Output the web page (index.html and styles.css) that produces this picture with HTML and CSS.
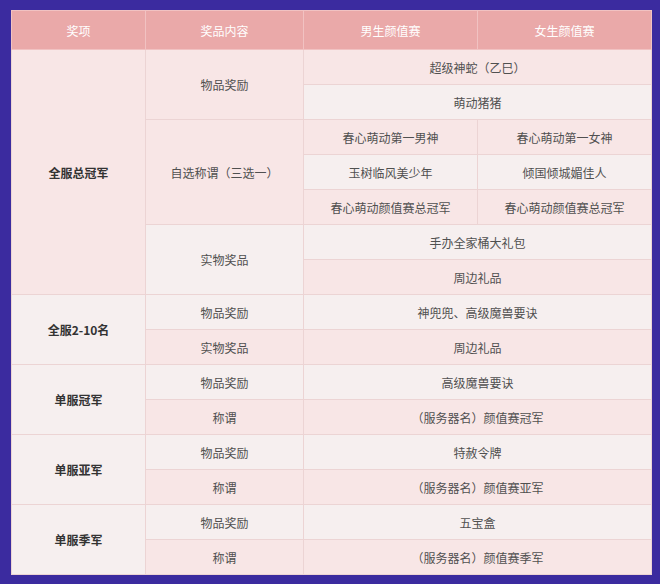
FILE: index.html
```html
<!DOCTYPE html>
<html lang="zh">
<head>
<meta charset="utf-8">
<link rel="stylesheet" href="styles.css">
</head>
<body>
<div class="page">
<table class="prize">
<colgroup>
<col class="c1"><col class="c2"><col class="c3"><col class="c4">
</colgroup>
<thead>
<tr><th>奖项</th><th>奖品内容</th><th>男生颜值赛</th><th>女生颜值赛</th></tr>
</thead>
<tbody>
<tr class="pink"><td rowspan="7" class="award">全服总冠军</td><td rowspan="2">物品奖励</td><td colspan="2">超级神蛇（乙巳）</td></tr>
<tr class="light"><td colspan="2">萌动猪猪</td></tr>
<tr class="pink"><td rowspan="3">自选称谓（三选一）</td><td>春心萌动第一男神</td><td>春心萌动第一女神</td></tr>
<tr class="light"><td>玉树临风美少年</td><td>倾国倾城媚佳人</td></tr>
<tr class="pink"><td>春心萌动颜值赛总冠军</td><td>春心萌动颜值赛总冠军</td></tr>
<tr class="light"><td rowspan="2">实物奖品</td><td colspan="2">手办全家桶大礼包</td></tr>
<tr class="pink"><td colspan="2">周边礼品</td></tr>
<tr class="light"><td rowspan="2" class="award">全服2-10名</td><td>物品奖励</td><td colspan="2">神兜兜、高级魔兽要诀</td></tr>
<tr class="pink"><td>实物奖品</td><td colspan="2">周边礼品</td></tr>
<tr class="light"><td rowspan="2" class="award">单服冠军</td><td>物品奖励</td><td colspan="2">高级魔兽要诀</td></tr>
<tr class="pink"><td>称谓</td><td colspan="2">（服务器名）颜值赛冠军</td></tr>
<tr class="light"><td rowspan="2" class="award">单服亚军</td><td>物品奖励</td><td colspan="2">特赦令牌</td></tr>
<tr class="pink"><td>称谓</td><td colspan="2">（服务器名）颜值赛亚军</td></tr>
<tr class="light"><td rowspan="2" class="award">单服季军</td><td>物品奖励</td><td colspan="2">五宝盒</td></tr>
<tr class="pink"><td>称谓</td><td colspan="2">（服务器名）颜值赛季军</td></tr>
</tbody>
</table>
</div>
</body>
</html>
```
FILE: styles.css
```css
html, body {
  margin: 0;
  padding: 0;
}
body {
  width: 660px;
  height: 584px;
  background: #3b2b9f;
  font-family: "Noto Sans CJK SC", "Liberation Sans", sans-serif;
  overflow: hidden;
}
.page {
  padding: 10px 0 0 11px;
}
.prize {
  border-collapse: collapse;
  table-layout: fixed;
  width: 640px;
  border: 1px solid #f3dbe4;
  font-size: 12px;
  color: #505050;
}
.c1 { width: 134px; }
.c2 { width: 158px; }
.c3 { width: 174px; }
.c4 { width: 174px; }
.prize th {
  height: 38px;
  padding: 0;
  background: #eaa9a9;
  color: #fff;
  font-weight: normal;
  border: 1px solid #f1c2c2;
  text-align: center;
}
.prize td {
  height: 34px;
  padding: 0;
  text-align: center;
  vertical-align: middle;
  border: 1px solid #ecd4d4;
}
.pink td { background: #f8e6e6; }
.light td { background: #f6efef; }
.prize td.award {
  font-weight: bold;
  color: #333;
  font-size: 12px;
}
```
